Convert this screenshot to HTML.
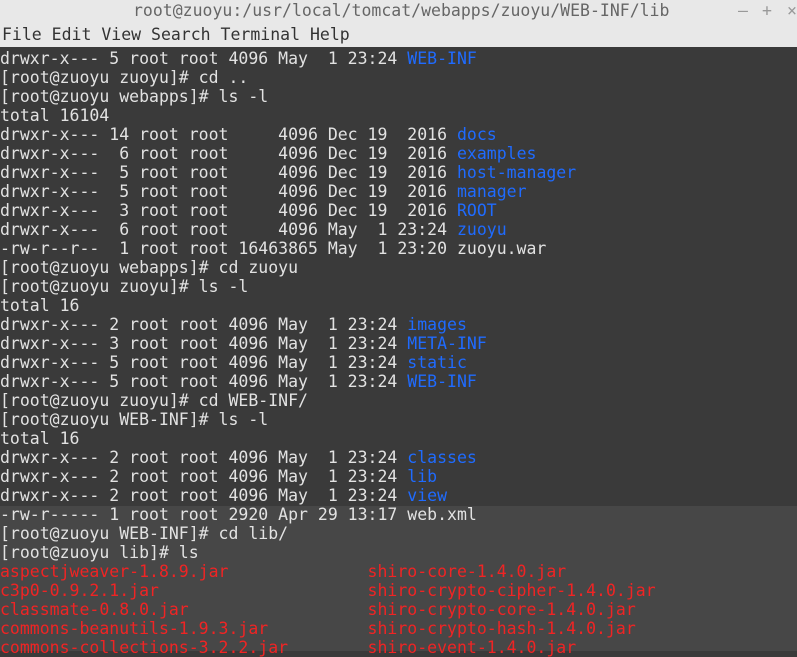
<!DOCTYPE html>
<html><head><meta charset="utf-8"><style>
html,body{margin:0;padding:0;width:797px;height:651px;overflow:hidden;background:#3a3a3a}
#title{position:absolute;left:0;top:0;width:797px;height:24px;background:#e8e8e8;font:16.5px "DejaVu Sans Mono",monospace;color:#666;}
#title .t{position:absolute;left:133px;top:1px;white-space:pre}
#title .bt{position:absolute;top:1px;color:#999}
#menu{position:absolute;left:0;top:24px;width:797px;height:23px;background:#e8e8e8;font:16.5px "DejaVu Sans Mono",monospace;color:#333;white-space:pre}
#menu span{position:absolute;left:2px;top:1px}
#term{position:absolute;left:0;top:47px;width:797px;height:604px;background:#3a3a3a}
#low{position:absolute;left:0;top:506px;width:797px;height:145px;background:#474747}
pre{position:absolute;left:0;top:49px;margin:0;font:16.5px/19px "DejaVu Sans Mono",monospace;color:#e2e2e2;white-space:pre}
.b{color:#1f6bff}.r{color:#f02424}
</style></head><body>
<div id="title"><span class="t">root@zuoyu:/usr/local/tomcat/webapps/zuoyu/WEB-INF/lib</span><span class="bt" style="left:738px">–</span><span class="bt" style="left:762px">+</span><span class="bt" style="left:787px">×</span></div>
<div id="menu"><span>File Edit View Search Terminal Help</span></div>
<div id="term"></div><div id="low"></div>
<pre>drwxr-x--- 5 root root 4096 May  1 23:24 <span class="b">WEB-INF</span>
[root@zuoyu zuoyu]# cd ..
[root@zuoyu webapps]# ls -l
total 16104
drwxr-x--- 14 root root     4096 Dec 19  2016 <span class="b">docs</span>
drwxr-x---  6 root root     4096 Dec 19  2016 <span class="b">examples</span>
drwxr-x---  5 root root     4096 Dec 19  2016 <span class="b">host-manager</span>
drwxr-x---  5 root root     4096 Dec 19  2016 <span class="b">manager</span>
drwxr-x---  3 root root     4096 Dec 19  2016 <span class="b">ROOT</span>
drwxr-x---  6 root root     4096 May  1 23:24 <span class="b">zuoyu</span>
-rw-r--r--  1 root root 16463865 May  1 23:20 zuoyu.war
[root@zuoyu webapps]# cd zuoyu
[root@zuoyu zuoyu]# ls -l
total 16
drwxr-x--- 2 root root 4096 May  1 23:24 <span class="b">images</span>
drwxr-x--- 3 root root 4096 May  1 23:24 <span class="b">META-INF</span>
drwxr-x--- 5 root root 4096 May  1 23:24 <span class="b">static</span>
drwxr-x--- 5 root root 4096 May  1 23:24 <span class="b">WEB-INF</span>
[root@zuoyu zuoyu]# cd WEB-INF/
[root@zuoyu WEB-INF]# ls -l
total 16
drwxr-x--- 2 root root 4096 May  1 23:24 <span class="b">classes</span>
drwxr-x--- 2 root root 4096 May  1 23:24 <span class="b">lib</span>
drwxr-x--- 2 root root 4096 May  1 23:24 <span class="b">view</span>
-rw-r----- 1 root root 2920 Apr 29 13:17 web.xml
[root@zuoyu WEB-INF]# cd lib/
[root@zuoyu lib]# ls
<span class="r">aspectjweaver-1.8.9.jar              shiro-core-1.4.0.jar</span>
<span class="r">c3p0-0.9.2.1.jar                     shiro-crypto-cipher-1.4.0.jar</span>
<span class="r">classmate-0.8.0.jar                  shiro-crypto-core-1.4.0.jar</span>
<span class="r">commons-beanutils-1.9.3.jar          shiro-crypto-hash-1.4.0.jar</span>
<span class="r">commons-collections-3.2.2.jar        shiro-event-1.4.0.jar</span>
</pre>
</body></html>
